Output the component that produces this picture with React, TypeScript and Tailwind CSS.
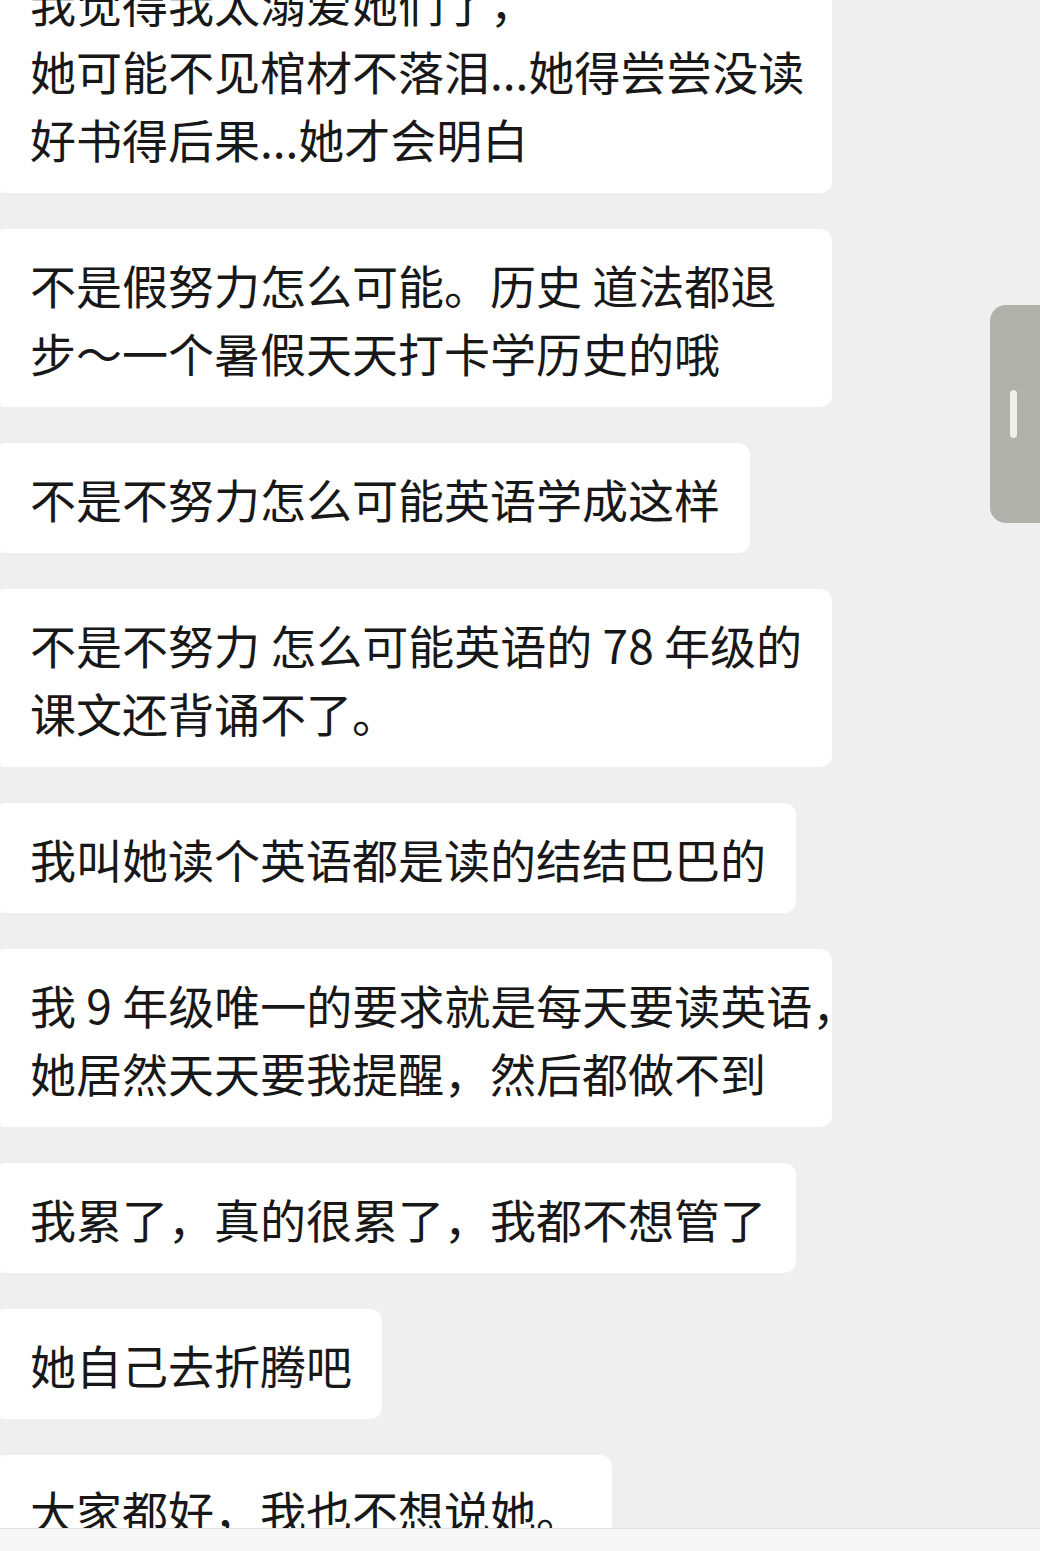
import React from 'react';

interface Message {
  lines: string[];
  width?: string;
}

const messages: Message[] = [
  {
    lines: ['我觉得我太溺爱她们了，', '她可能不见棺材不落泪...她得尝尝没读', '好书得后果...她才会明白'],
    width: 'w-[832px]',
  },
  { lines: ['不是假努力怎么可能。历史 道法都退', '步～一个暑假天天打卡学历史的哦'], width: 'w-[832px]' },
  { lines: ['不是不努力怎么可能英语学成这样'], width: 'w-[750px]' },
  { lines: ['不是不努力 怎么可能英语的 78 年级的', '课文还背诵不了。'], width: 'w-[832px]' },
  { lines: ['我叫她读个英语都是读的结结巴巴的'], width: 'w-[796px]' },
  { lines: ['我 9 年级唯一的要求就是每天要读英语，', '她居然天天要我提醒，然后都做不到'], width: 'w-[832px]' },
  { lines: ['我累了，真的很累了，我都不想管了'], width: 'w-[796px]' },
  { lines: ['她自己去折腾吧'], width: 'w-[382px]' },
  { lines: ['大家都好，我也不想说她。'], width: 'w-[612px]' },
];

const Bubble: React.FC<{ message: Message; first?: boolean }> = ({ message, first }) => (
  <div
    className={`${message.width} shrink-0 bg-white rounded-l-[4px] rounded-r-[12px] pl-[30px] pr-[20px] py-[21px] ${
      first ? 'mt-[-53px]' : ''
    }`}
  >
    {message.lines.map((line, i) => (
      <div key={i} className="whitespace-nowrap text-[46px] leading-[68px] text-[#181818]">
        {line}
      </div>
    ))}
  </div>
);

export default function App() {
  return (
    <div
      className="relative w-[1040px] h-[1551px] overflow-hidden bg-[#efefef] flex flex-col"
      style={{ fontFamily: '"Noto Sans CJK SC", "Noto Sans", sans-serif' }}
    >
      <div className="h-[1528px] overflow-hidden flex flex-col items-start gap-[36px]">
        {messages.map((m, i) => (
          <Bubble key={i} message={m} first={i === 0} />
        ))}
      </div>

      {/* bottom bar */}
      <div className="h-[23px] bg-[#f6f6f6] border-t border-[#e2e2e2]" />

      {/* scrollbar thumb */}
      <div className="absolute left-[990px] top-[305px] w-[70px] h-[218px] rounded-[16px] bg-[#b1b1ac] flex items-center pl-[20px]">
        <div className="w-[7px] h-[48px] rounded-full bg-[#eef0ea]" />
      </div>
    </div>
  );
}
